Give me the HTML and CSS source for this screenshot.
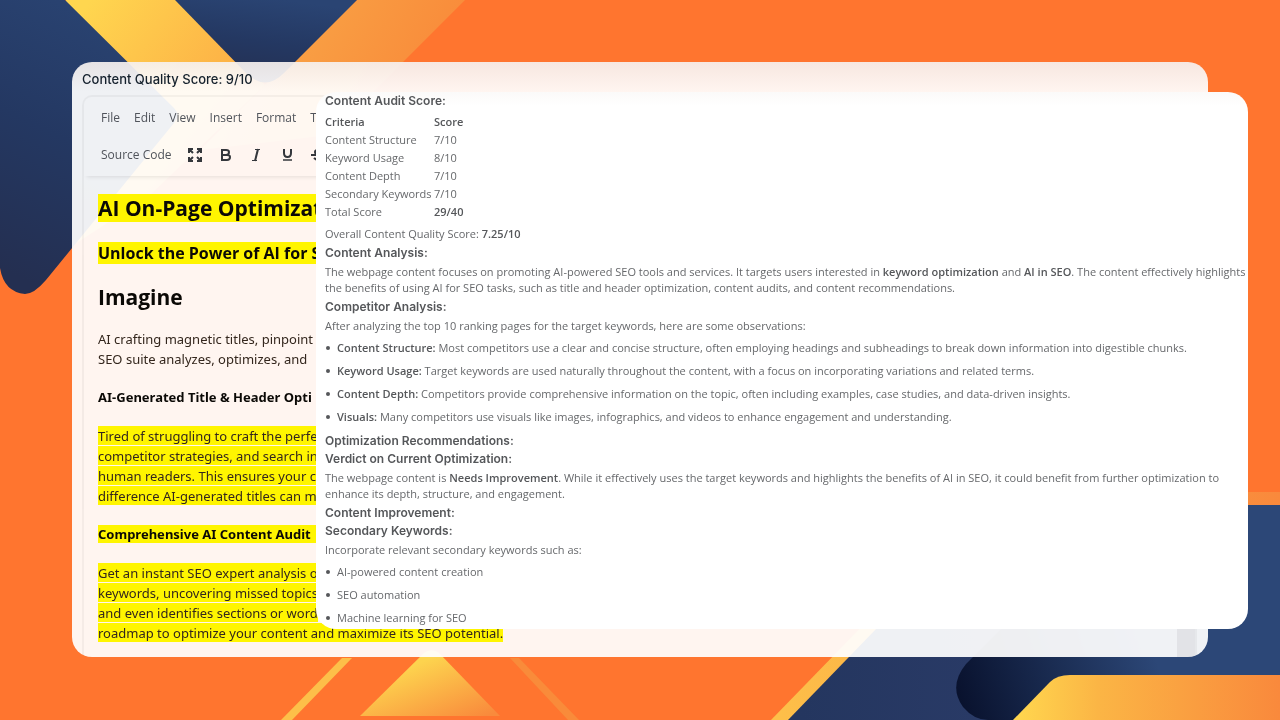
FILE: index.html
```html
<!DOCTYPE html>
<html lang="en">
  <head>
    <meta charset="UTF-8" />
    <meta name="viewport" content="width=device-width, initial-scale=1.0" />
    <title>Content Audit</title>
    <link rel="stylesheet" href="styles.css">
  </head>
  <body>
    <svg class="backdrop" viewBox="0 0 1280 720" preserveAspectRatio="xMidYMid slice" aria-hidden="true">
      <defs>
        <linearGradient id="navy" gradientUnits="userSpaceOnUse" x1="800" y1="0" x2="1240" y2="0">
          <stop offset="0" stop-color="#24365f" />
          <stop offset="0.4" stop-color="#293a66" />
          <stop offset="1" stop-color="#2c4777" />
        </linearGradient>
        <linearGradient id="navy-v" x1="0.6" y1="0" x2="0.3" y2="1">
          <stop offset="0" stop-color="#2a4473" />
          <stop offset="0.5" stop-color="#243862" />
          <stop offset="1" stop-color="#242f51" />
        </linearGradient>
        <linearGradient id="band" gradientUnits="userSpaceOnUse" x1="90" y1="0" x2="310" y2="170">
          <stop offset="0" stop-color="#ffd64f" />
          <stop offset="0.5" stop-color="#fdb547" />
          <stop offset="1" stop-color="#f9953f" />
        </linearGradient>
        <linearGradient id="band-fade" gradientUnits="userSpaceOnUse" x1="300" y1="0" x2="440" y2="80">
          <stop offset="0" stop-color="#f9a245" />
          <stop offset="1" stop-color="#f98a3a" />
        </linearGradient>
        <linearGradient id="peak" x1="0.3" y1="0.3" x2="0.9" y2="1">
          <stop offset="0" stop-color="#fdd34e" />
          <stop offset="1" stop-color="#f98a3c" />
        </linearGradient>
        <linearGradient id="gold" gradientUnits="userSpaceOnUse" x1="1020" y1="0" x2="1280" y2="0">
          <stop offset="0" stop-color="#ffd54e" />
          <stop offset="0.3" stop-color="#fbb545" />
          <stop offset="1" stop-color="#f9893c" />
        </linearGradient>
        <linearGradient id="edge" gradientUnits="userSpaceOnUse" x1="780" y1="0" x2="1280" y2="0">
          <stop offset="0" stop-color="#fdbf49" />
          <stop offset="1" stop-color="#f9893c" />
        </linearGradient>
        <linearGradient id="ink" gradientUnits="userSpaceOnUse" x1="960" y1="700" x2="1150" y2="640">
          <stop offset="0" stop-color="#09122e" />
          <stop offset="1" stop-color="#2c4777" />
        </linearGradient>
      </defs>
      <rect width="1280" height="720" fill="#ff752f" />
      <path d="M66 0H180L265 85L150 195L66 250Z" fill="url(#band)" />
      <path d="M357 0H465L330 135L200 150L265 85Z" fill="url(#band-fade)" />
      <path d="M0 0H65L174 108Q181 115 174 123L46 280Q34 294 25 294Q4 292 0 268Z" fill="url(#navy-v)" />
      <path d="M175 0H357L284 73Q265 92 246 73Z" fill="url(#navy-v)" />
      <path d="M342 658H352L292 720H281Z" fill="#fdbf49" />
      <path d="M360 716L424 653Q432 647 440 654L500 716Z" fill="url(#peak)" />
      <path d="M510 658H519L579 720H568Z" fill="#f98b3a" />
      <path d="M771 720L980 505L1000 492H1280V720Z" fill="url(#edge)" />
      <path d="M788 720L996 505H1280V720Z" fill="url(#navy)" />
      <path d="M1125 505L966 664Q948 686 963 707Q974 720 988 720H1280V505Z" fill="url(#ink)" />
      <path d="M1013 720L1050 682Q1057 675 1070 675H1280V720Z" fill="url(#gold)" />
    </svg>

    <main class="stage">
      <section class="editor-card">
        <h2 class="quality-score">Content Quality Score: 9/10</h2>

        <div class="editor">
          <header class="editor-header">
            <nav class="menubar">
              <button type="button">File</button>
              <button type="button">Edit</button>
              <button type="button">View</button>
              <button type="button">Insert</button>
              <button type="button">Format</button>
              <button type="button">Tools</button>
            </nav>
            <div class="toolbar">
              <button type="button" class="source-code">Source Code</button>
              <button type="button" aria-label="Fullscreen">
                <svg width="16" height="16" viewBox="0 0 16 16" fill="none" stroke="#34373c" stroke-width="2">
                  <path d="M2 6V2H6M3 3L6 6M10 2H14V6M13 3L10 6M2 10V14H6M3 13L6 10M14 10V14H10M13 13L10 10" />
                </svg>
              </button>
              <button type="button" aria-label="Bold">
                <svg width="16" height="16" viewBox="0 0 16 16" fill="none" stroke="#34373c" stroke-width="2">
                  <path d="M4 3H8Q11 3 11 5Q11 8 8 8H4ZM4 8H9Q12 8 12 10Q12 13 9 13H4Z" />
                </svg>
              </button>
              <button type="button" aria-label="Italic">
                <svg width="16" height="16" viewBox="0 0 16 16" fill="none" stroke="#34373c">
                  <path d="M6 2.500H11M3 13.500H8" />
                  <path d="M9 2L6 14" stroke-width="2" />
                </svg>
              </button>
              <button type="button" aria-label="Underline">
                <svg width="16" height="16" viewBox="0 0 16 16" fill="none" stroke="#34373c">
                  <path d="M4 2V6Q4 10 7.500 10Q11 10 11 6V2" stroke-width="2" />
                  <path d="M3 13H12" stroke-width="1.500" />
                </svg>
              </button>
              <button type="button" aria-label="Strikethrough">
                <svg width="16" height="16" viewBox="0 0 16 16" fill="none" stroke="#34373c" stroke-width="2">
                  <path d="M11 4Q9 3 7 3Q4 3 4 5Q4 7 7 8Q11 9 11 11Q11 13 8 13Q5 13 3 11M0 8H14" />
                </svg>
              </button>
            </div>
          </header>

          <div class="editor-body">
            <article class="document">
              <h1><mark>AI On-Page Optimization</mark></h1>
              <h2><mark>Unlock the Power of AI for SEO</mark></h2>
              <h1 class="imagine">Imagine</h1>
              <p>AI crafting magnetic titles, pinpoint<br />SEO suite analyzes, optimizes, and</p>
              <h3>AI-Generated Title &amp; Header Opti</h3>
              <p><mark>Tired of struggling to craft the perfect<br />competitor strategies, and search in<br />human readers. This ensures your c<br />difference AI-generated titles can m</mark></p>
              <h3><mark>Comprehensive AI Content Audit</mark></h3>
              <p><mark>Get an instant SEO expert analysis of<br />keywords, uncovering missed topics<br />and even identifies sections or word<br />roadmap to optimize your content and maximize its SEO potential.</mark></p>
            </article>
            <div class="scroll-track"></div>
          </div>
        </div>
      </section>

      <section class="audit-card">
        <h3>Content Audit Score:</h3>
        <table>
          <thead>
            <tr><th>Criteria</th><th>Score</th></tr>
          </thead>
          <tbody>
            <tr><td>Content Structure</td><td>7/10</td></tr>
            <tr><td>Keyword Usage</td><td>8/10</td></tr>
            <tr><td>Content Depth</td><td>7/10</td></tr>
            <tr><td>Secondary Keywords</td><td>7/10</td></tr>
            <tr><td>Total Score</td><td><strong>29/40</strong></td></tr>
          </tbody>
        </table>
        <p>Overall Content Quality Score: <strong>7.25/10</strong></p>

        <h3>Content Analysis:</h3>
        <p>The webpage content focuses on promoting AI-powered SEO tools and services. It targets users interested in <strong>keyword optimization</strong> and <strong>AI in SEO</strong>. The content effectively highlights<br />the benefits of using AI for SEO tasks, such as title and header optimization, content audits, and content recommendations.</p>

        <h3>Competitor Analysis:</h3>
        <p>After analyzing the top 10 ranking pages for the target keywords, here are some observations:</p>
        <ul>
          <li><strong>Content Structure:</strong> Most competitors use a clear and concise structure, often employing headings and subheadings to break down information into digestible chunks.</li>
          <li><strong>Keyword Usage:</strong> Target keywords are used naturally throughout the content, with a focus on incorporating variations and related terms.</li>
          <li><strong>Content Depth:</strong> Competitors provide comprehensive information on the topic, often including examples, case studies, and data-driven insights.</li>
          <li><strong>Visuals:</strong> Many competitors use visuals like images, infographics, and videos to enhance engagement and understanding.</li>
        </ul>

        <h3>Optimization Recommendations:</h3>
        <h3>Verdict on Current Optimization:</h3>
        <p>The webpage content is <strong>Needs Improvement</strong>. While it effectively uses the target keywords and highlights the benefits of AI in SEO, it could benefit from further optimization to<br />enhance its depth, structure, and engagement.</p>

        <h3>Content Improvement:</h3>
        <h3>Secondary Keywords:</h3>
        <p>Incorporate relevant secondary keywords such as:</p>
        <ul>
          <li>AI-powered content creation</li>
          <li>SEO automation</li>
          <li>Machine learning for SEO</li>
        </ul>
      </section>
    </main>
  </body>
</html>
```
FILE: styles.css
```css
* {
  box-sizing: border-box;
}
body {
  margin: 0;
  min-height: 100vh;
  background-color: #ff752f;
  font-family: "Open Sans", sans-serif;
}
h1,
h2,
h3,
p,
ul {
  margin: 0;
}
button {
  padding: 0;
  border: 0;
  background: none;
  font: inherit;
  color: inherit;
  cursor: pointer;
}
.backdrop {
  position: fixed;
  inset: 0;
  width: 100%;
  height: 100%;
}
.stage {
  position: relative;
  padding: 62px 72px;
}

/* editor */
.editor-card {
  padding: 8px 11px 0 10px;
  border-radius: 20px;
  overflow: hidden;
  background: linear-gradient(rgba(246, 240, 238, 0.93), rgba(255, 255, 255, 0.93) 30px);
}
.quality-score {
  font-family: Inter, sans-serif;
  font-size: 13px;
  font-weight: 500;
  line-height: 18px;
  color: #14202c;
}
.editor {
  margin-top: 7px;
  border: 2px solid rgba(0, 0, 0, 0.04);
  border-bottom: 0;
  border-radius: 10px 10px 0 0;
}
.editor-header {
  padding: 10px 17px;
  border-radius: 10px 10px 0 0;
  box-shadow: 0 4px 4px -3px rgba(0, 0, 0, 0.1);
  font-size: 12px;
  line-height: 22px;
  color: #50545b;
}
.menubar {
  display: flex;
  gap: 14px;
}
.toolbar {
  display: flex;
  align-items: center;
  gap: 15px;
  margin-top: 15px;
}
.toolbar svg {
  display: block;
}
.editor-body {
  display: flex;
  justify-content: space-between;
}
.document {
  display: flex;
  flex-direction: column;
  gap: 18px;
  padding: 17px 14px 14px;
  font-family: "Noto Sans", "Open Sans", sans-serif;
  color: #33261d;
  white-space: nowrap;
}
.document h1 {
  font-family: "Open Sans", sans-serif;
  font-size: 21px;
  line-height: 30px;
  color: #0b0906;
}
.document .imagine {
  line-height: 28px;
}
.document h2 {
  font-family: "Open Sans", sans-serif;
  font-size: 16px;
  line-height: 24px;
  color: #0b0906;
}
.document h3 {
  font-size: 13px;
  line-height: 21px;
  color: #0b0906;
}
.document p {
  font-size: 13px;
  line-height: 20px;
}
mark {
  background-color: #fff500;
  color: inherit;
}
p mark {
  padding-top: 1px;
}
h3 mark {
  padding-right: 10px;
}
.scroll-track {
  width: 18px;
  background-color: rgba(0, 0, 0, 0.06);
}

/* audit result, lies over the editor */
.audit-card {
  position: absolute;
  top: 92px;
  left: 316px;
  right: 32px;
  padding: 0 8px 3px 9px;
  border-radius: 20px;
  background: linear-gradient(#fbfaf9, #fff 14px);
  color: #66686b;
  font-size: 11px;
  line-height: 16px;
}
.audit-card h3 {
  font-family: Inter, sans-serif;
  font-size: 12px;
  font-weight: 600;
  line-height: 18px;
  color: #55575a;
}
.audit-card strong,
.audit-card th {
  font-weight: 600;
  color: #55575a;
}
.audit-card table {
  margin: 3px 0 5px;
  border-collapse: collapse;
}
.audit-card th,
.audit-card td {
  padding: 0;
  height: 18px;
  text-align: left;
  white-space: nowrap;
}
.audit-card th:first-child,
.audit-card td:first-child {
  min-width: 109px;
}
.audit-card p {
  margin: 2px 0;
  white-space: nowrap;
}
.audit-card ul {
  padding: 4px 0 7px;
  list-style: none;
}
.audit-card li {
  display: flex;
  align-items: center;
  white-space: pre-wrap;
}
.audit-card li::before {
  content: "";
  width: 4px;
  height: 4px;
  margin: 0 7px 0 1px;
  border-radius: 50%;
  background-color: #55575a;
}
.audit-card li + li {
  margin-top: 7px;
}
.audit-card ul:last-child {
  padding-bottom: 0;
}
```
